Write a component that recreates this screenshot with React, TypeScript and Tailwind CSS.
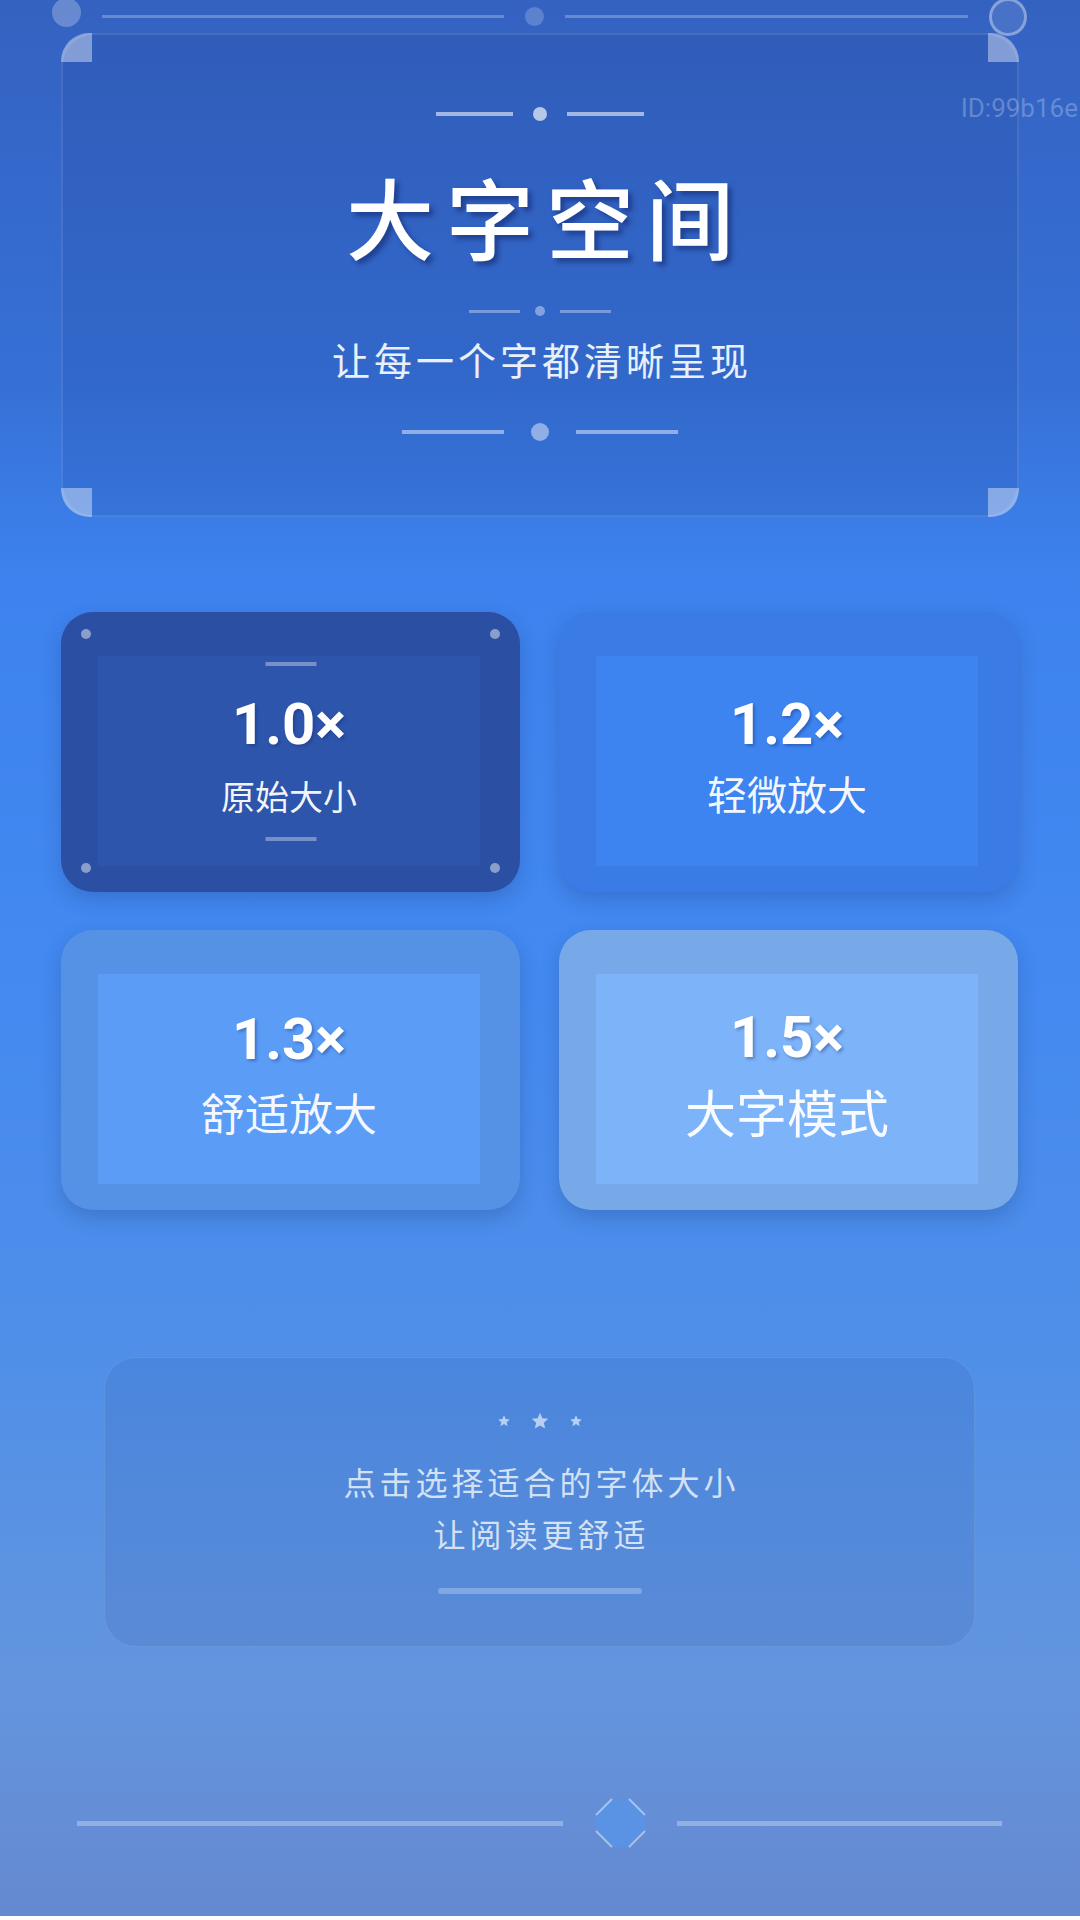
import React from 'react';

const cjk = "font-['Noto_Sans_CJK_SC',sans-serif]";
const num = "font-['Roboto','Noto_Sans_CJK_SC',sans-serif]";

const scales = [
  { value: '1.0×', label: '原始大小', outer: 'bg-[#2b4fa2]', inner: 'bg-[#2d55ac]', size: 'text-[34px]', gap: 'gap-[26px]', active: true },
  { value: '1.2×', label: '轻微放大', outer: 'bg-[#3a7be6]', inner: 'bg-[#3d84f1]', size: 'text-[40px]', gap: 'gap-[20px]', active: false },
  { value: '1.3×', label: '舒适放大', outer: 'bg-[#5592e6]', inner: 'bg-[#5a9cf6]', size: 'text-[44px]', gap: 'gap-[22px]', active: false },
  { value: '1.5×', label: '大字模式', outer: 'bg-[#77a9e9]', inner: 'bg-[#7db3f8]', size: 'text-[51px]', gap: 'gap-[20px]', active: false },
];

function Star({ size }: { size: number }) {
  return (
    <svg width={size} height={size} viewBox="0 0 24 24">
      <polygon
        points="12,2 14.9,8.6 22,9.3 16.6,14 18.2,21 12,17.3 5.8,21 7.4,14 2,9.3 9.1,8.6"
        fill="rgba(255,255,255,0.6)"
      />
    </svg>
  );
}

export default function App() {
  return (
    <div
      className={`relative w-[1080px] h-[1916px] overflow-hidden bg-[linear-gradient(180deg,#3462c1_0%,#3670d6_20%,#3d82ee_30%,#4389f1_50%,#4f8fe9_70%,#6395de_88%,#6589d0_100%)] ${cjk}`}
    >
      {/* top ornament */}
      <div className="flex items-center h-[33px] pl-[52px]">
        <div className="w-[29px] h-[29px] mb-[8px] rounded-full bg-white/25"></div>
        <div className="ml-[21px] w-[402px] h-[3px] bg-white/25"></div>
        <div className="ml-[21px] w-[19px] h-[19px] rounded-full bg-white/20"></div>
        <div className="ml-[21px] w-[403px] h-[3px] bg-white/25"></div>
        <div className="ml-[21px] w-[38px] h-[38px] rounded-full border-[3px] border-white/35 bg-white/10"></div>
      </div>

      {/* header card */}
      <div className="relative ml-[61px] w-[958px] h-[484px] rounded-[32px] border-2 border-white/10 bg-[#0f2370]/10 flex flex-col items-center pt-[72px]">
        <div className="absolute -top-[2px] -left-[2px] w-[31px] h-[29px] rounded-tl-[28px] bg-white/40"></div>
        <div className="absolute -top-[2px] -right-[2px] w-[31px] h-[29px] rounded-tr-[28px] bg-white/40"></div>
        <div className="absolute -bottom-[2px] -left-[2px] w-[31px] h-[29px] rounded-bl-[28px] bg-white/40"></div>
        <div className="absolute -bottom-[2px] -right-[2px] w-[31px] h-[29px] rounded-br-[28px] bg-white/40"></div>

        <div className="flex items-center gap-[20px] h-[14px]">
          <div className="w-[77px] h-[4px] bg-white/55"></div>
          <div className="w-[14px] h-[14px] rounded-full bg-white/65"></div>
          <div className="w-[77px] h-[4px] bg-white/55"></div>
        </div>

        <h1 className="mt-[50px] text-[88px] leading-none font-medium tracking-[12px] pl-[12px] text-white [text-shadow:4px_4px_5px_rgba(20,40,110,0.6)]">
          大字空间
        </h1>

        <div className="mt-[47px] flex items-center gap-[15px] h-[10px]">
          <div className="w-[51px] h-[3px] bg-white/35"></div>
          <div className="w-[10px] h-[10px] rounded-full bg-white/40"></div>
          <div className="w-[51px] h-[3px] bg-white/35"></div>
        </div>

        <p className="mt-[24px] text-[38px] leading-none tracking-[4px] pl-[4px] text-white/90">
          让每一个字都清晰呈现
        </p>

        <div className="mt-[45px] flex items-center gap-[27px] h-[18px]">
          <div className="w-[102px] h-[4px] bg-white/45"></div>
          <div className="w-[18px] h-[18px] rounded-full bg-white/45"></div>
          <div className="w-[102px] h-[4px] bg-white/45"></div>
        </div>
      </div>

      <div className={`absolute top-[95px] right-[2px] text-[26px] leading-none text-white/25 ${num}`}>
        ID:99b16e
      </div>

      {/* scale options */}
      <div className="mt-[95px] ml-[61px] grid grid-cols-[459px_459px] gap-x-[39px] gap-y-[38px]">
        {scales.map((s) => (
          <div
            key={s.value}
            className={`relative h-[280px] rounded-[32px] pt-[44px] pb-[26px] pl-[37px] pr-[40px] flex shadow-[0_8px_20px_rgba(20,40,100,0.22)] ${s.outer}`}
          >
            {s.active && (
              <>
                <div className="absolute top-[17px] left-[20px] w-[10px] h-[10px] rounded-full bg-white/45"></div>
                <div className="absolute top-[17px] right-[20px] w-[10px] h-[10px] rounded-full bg-white/45"></div>
                <div className="absolute bottom-[19px] left-[20px] w-[10px] h-[10px] rounded-full bg-white/45"></div>
                <div className="absolute bottom-[19px] right-[20px] w-[10px] h-[10px] rounded-full bg-white/45"></div>
                <div className="absolute top-[50px] left-1/2 -translate-x-1/2 w-[51px] h-[4px] bg-white/35"></div>
                <div className="absolute bottom-[51px] left-1/2 -translate-x-1/2 w-[51px] h-[4px] bg-white/35"></div>
              </>
            )}
            <div className={`flex-1 flex flex-col items-center justify-center pb-[14px] ${s.gap} ${s.inner}`}>
              <div className={`text-[58px] leading-none font-bold text-white [text-shadow:2px_2px_3px_rgba(20,40,110,0.35)] ${num}`}>
                {s.value}
              </div>
              <div className={`leading-none text-white/95 ${s.size}`}>{s.label}</div>
            </div>
          </div>
        ))}
      </div>

      {/* hint card */}
      <div className="mt-[147px] ml-[104px] w-[871px] h-[290px] rounded-[32px] border border-white/10 bg-[#1e3c8c]/10 flex flex-col items-center pt-[54px]">
        <div className="flex items-center gap-[19px] h-[18px]">
          <Star size={14} />
          <Star size={20} />
          <Star size={14} />
        </div>
        <div className="mt-[25px] text-[32px] leading-[52px] tracking-[4px] pl-[4px] text-white/75 text-center">
          <p>点击选择适合的字体大小</p>
          <p>让阅读更舒适</p>
        </div>
        <div className="mt-[29px] w-[204px] h-[6px] rounded-full bg-white/25"></div>
      </div>

      {/* bottom ornament */}
      <div className="mt-[151px] h-[50px] pl-[77px] flex items-center">
        <div className="w-[486px] h-[5px] bg-white/30"></div>
        <svg className="ml-[32px]" width="51" height="50" viewBox="0 0 51 50">
          <polygon points="17,1 34,1 50,17 50,33 34,49 17,49 1,33 1,17" fill="#5a92e4" />
          <line x1="17" y1="1" x2="1" y2="17" stroke="rgba(255,255,255,0.45)" strokeWidth="2" />
          <line x1="34" y1="1" x2="50" y2="17" stroke="rgba(255,255,255,0.45)" strokeWidth="2" />
          <line x1="1" y1="33" x2="17" y2="49" stroke="rgba(255,255,255,0.45)" strokeWidth="2" />
          <line x1="50" y1="33" x2="34" y2="49" stroke="rgba(255,255,255,0.45)" strokeWidth="2" />
        </svg>
        <div className="ml-[31px] w-[325px] h-[5px] bg-white/30"></div>
      </div>
    </div>
  );
}
